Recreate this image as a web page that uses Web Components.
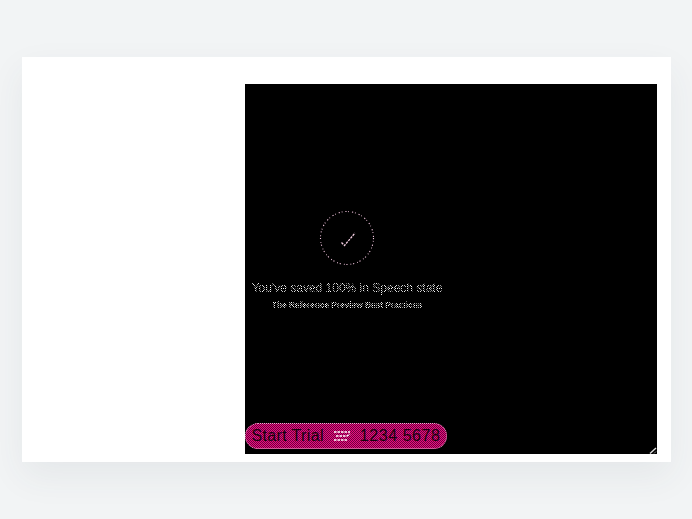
<!doctype html>
<html><head><meta charset="utf-8"><style>
html,body{margin:0;height:100%}
body{background:#f2f4f5;font-family:"Liberation Sans",Arial,sans-serif}
</style></head><body>
<app-stage><result-panel>
<span slot="title">You've saved 100% in Speech state</span>
<span slot="sub">The Reference Preview Best Practices</span>
<span slot="left">Start Trial</span>
<span slot="right">1234 5678</span>
</result-panel></app-stage>
<script>
customElements.define('app-stage',class extends HTMLElement{constructor(){super();this.attachShadow({mode:'open'}).innerHTML=`<style>
:host{display:block;box-sizing:border-box;width:692px;height:519px;padding:57px 21px 57px 22px}
.card{box-sizing:border-box;height:405px;background:#fff;box-shadow:0 14px 34px rgba(60,70,80,.07);padding:27px 14px 8px 223px;display:flex}
::slotted(*){flex:1}
</style><div class="card"><slot></slot></div>`}});
customElements.define('result-panel',class extends HTMLElement{constructor(){super();this.attachShadow({mode:'open'}).innerHTML=`<style>
:host{display:block;position:relative;background:#000;color:#eee}
.col{box-sizing:border-box;width:204px;height:100%;display:flex;flex-direction:column;align-items:center;padding:126px 0 5px}
.dith{-webkit-mask-image:repeating-conic-gradient(#000 0 25%,transparent 0 50%);-webkit-mask-size:2px 2px;mask-image:repeating-conic-gradient(#000 0 25%,transparent 0 50%);mask-size:2px 2px}
svg{display:block}
.title{margin-top:14px;font-size:12px;line-height:16px;white-space:nowrap;color:#fff}
.sub{margin-top:4px;font-size:8.3px;line-height:10px;white-space:nowrap;color:#fff;font-weight:700}
.pill{margin-top:auto;align-self:flex-start;width:202px;height:26px;box-sizing:border-box;border-radius:13px;border:1px dotted #eeb0d2;background:repeating-conic-gradient(#e6107f 0 25%,#70003f 0 50%) 0 0/2px 2px;display:flex;align-items:center;justify-content:center;gap:9px;white-space:nowrap;font-size:16px;line-height:24px;color:#16000c}
.l{letter-spacing:.35px}
.r{letter-spacing:.55px}
.grip{position:absolute;right:0;bottom:0}
</style><div class="col">
<svg width="56" height="56" viewBox="0 0 56 56" fill="none"><circle cx="28" cy="28" r="26.5" stroke="#f2c4de" stroke-width="1.1" stroke-dasharray="1.2 1.8 .8 3"/><path d="M22.5 32.5l3 3 10.5-12.5" stroke="#f6d0e4" stroke-width="1.3" stroke-dasharray="2.4 1"/></svg>
<div class="title dith"><slot name="title"></slot></div>
<div class="sub dith"><slot name="sub"></slot></div>
<div class="pill"><span class="l"><slot name="left"></slot></span>
<svg width="18" height="12" viewBox="0 0 18 12" fill="none" stroke="#fff" stroke-width="1.3" stroke-dasharray="2.5 1"><path d="M1 2h16M3 6h11l3-2M1 10h13"/></svg>
<span class="r"><slot name="right"></slot></span></div>
</div>
<svg class="grip" width="8" height="7" viewBox="0 0 8 7" fill="none"><path d="M1 6.5L7 1" stroke="#ddd" stroke-width="1.4"/><path d="M5 6.5L7 4.5" stroke="#888"/></svg>
</div>`}});
</script></body></html>
